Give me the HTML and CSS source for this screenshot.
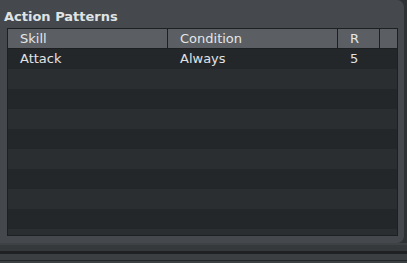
FILE: index.html
```html
<!DOCTYPE html>
<html>
<head>
<meta charset="utf-8">
<link rel="stylesheet" href="styles.css">
</head>
<body>
<div class="screen">
  <section class="panel">
    <h2 class="title">Action Patterns</h2>
    <div class="table">
      <div class="head">
        <div class="cell c-skill">Skill</div>
        <div class="cell c-cond">Condition</div>
        <div class="cell c-r">R</div>
        <div class="cell c-pad"></div>
      </div>
      <div class="body">
        <div class="row"><div class="cell c-skill">Attack</div><div class="cell c-cond">Always</div><div class="cell c-r">5</div><div class="cell c-pad"></div></div>
        <div class="row"></div>
        <div class="row"></div>
        <div class="row"></div>
        <div class="row"></div>
        <div class="row"></div>
        <div class="row"></div>
        <div class="row"></div>
        <div class="row"></div>
        <div class="row"></div>
      </div>
    </div>
  </section>
  <div class="below">
    <div class="line-a"></div>
    <div class="band-a"></div>
    <div class="line-b"></div>
    <div class="band-b"></div>
    <div class="line-c"></div>
    <div class="band-c"></div>
  </div>
</div>
</body>
</html>
```
FILE: styles.css
```css
* { box-sizing: border-box; margin: 0; padding: 0; }
html, body { width: 407px; height: 263px; overflow: hidden; background: #2f3235; }
body { font-family: "DejaVu Sans", sans-serif; color: #e2e4e6; }
.screen { display: flex; flex-direction: column; width: 407px; height: 263px; }
.panel {
  width: 404px;
  height: 243px;
  background: #45494d;
  border-radius: 0 7px 7px 0;
  padding: 8px 7px 7px 7px;
  display: flex;
  flex-direction: column;
  flex: none;
}
.title {
  font-size: 13px;
  font-weight: bold;
  color: #dfe3e6;
  line-height: 18px;
  height: 20px;
  margin-left: -3px;
}
.table {
  width: 391px;
  height: 208px;
  border: 1px solid #1d1f21;
  display: flex;
  flex-direction: column;
  overflow: hidden;
}
.head {
  display: flex;
  height: 20px;
  background: #5b5f63;
  border-bottom: 1px solid #1d1f21;
  flex: none;
}
.cell {
  font-size: 13px;
  line-height: 19px;
  padding-left: 12px;
  white-space: nowrap;
}
.head .cell { color: #e4e6e8; border-right: 1px solid #1d1f21; }
.head .cell:last-child { border-right: none; }
.c-skill { width: 160px; }
.c-cond { width: 170px; }
.c-r { width: 42px; }
.c-pad { flex: 1; }
.body { flex: 1; overflow: hidden; }
.row { display: flex; height: 20px; }
.row .cell { line-height: 20px; color: #e0e3e6; }
.row:nth-child(odd) { background: #24272a; }
.row:nth-child(even) { background: #2b2e31; }
.below { display: flex; flex-direction: column; flex: 1; }
.line-a { height: 2px; background: #3e4245; }
.band-a { height: 6px; background: #36393c; }
.line-b { height: 3px; background: #1f2123; }
.band-b { height: 6px; background: #3b3f42; }
.line-c { height: 1px; background: #232527; }
.band-c { flex: 1; background: #3b3f42; }
```
